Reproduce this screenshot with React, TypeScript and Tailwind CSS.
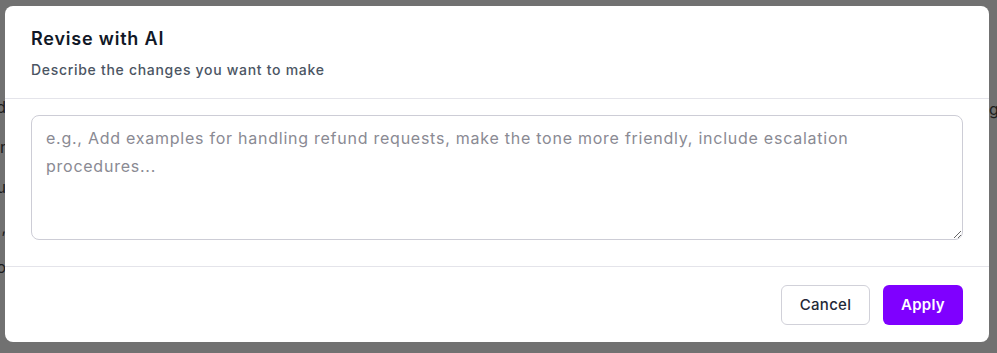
import React from "react";

const behindLeft = ["d", "r", "u", ",", "o"];

export default function App() {
  return (
    <div className="relative w-[997px] h-[353px] overflow-hidden bg-[#717171] font-['Inter',sans-serif]">
      {/* page behind the overlay */}
      <div className="absolute right-[991px] top-[97px] flex flex-col items-end gap-[19px] text-[16px] leading-[21px] text-[#1c1c1c]">
        {behindLeft.map((c, i) => (
          <span key={i}>{c}</span>
        ))}
      </div>
      <div className="absolute left-[989px] top-[99px] text-[16px] leading-[21px] text-[#1c1c1c]">
        g
      </div>

      {/* Dialog */}
      <div className="absolute left-[5px] top-[6px] w-[984px] rounded-lg bg-white">
        <div className="border-b border-[#e4e4ea] px-[26px] pt-[19px] pb-[18px]">
          <h2 className="text-lg leading-7 font-semibold tracking-[0.8px] text-[#111827]">
            Revise with AI
          </h2>
          <p className="mt-[7px] text-sm leading-5 font-medium tracking-[0.7px] text-[#4b5563]">
            Describe the changes you want to make
          </p>
        </div>

        <div className="px-[26px] pt-[16px] pb-[26px]">
          <textarea
            className="block w-full h-[125px] rounded-lg border border-[#cdcdd6] bg-white px-3.5 py-2 text-base leading-7 tracking-[0.75px] text-[#111827] placeholder:text-[#8a8a93] outline-none"
            placeholder="e.g., Add examples for handling refund requests, make the tone more friendly, include escalation procedures..."
          />
        </div>

        <div className="flex justify-end gap-[13px] border-t border-[#e4e4ea] px-[26px] pt-[18px] pb-[17px]">
          <button className="h-10 w-[89px] rounded-md border border-[#d1d1d9] bg-white text-[15px] font-medium tracking-[0.3px] text-[#1f2937]">
            Cancel
          </button>
          <button className="h-10 w-[80px] rounded-md bg-[#7f00ff] text-[15px] font-semibold tracking-[0.3px] text-white">
            Apply
          </button>
        </div>
      </div>
    </div>
  );
}
